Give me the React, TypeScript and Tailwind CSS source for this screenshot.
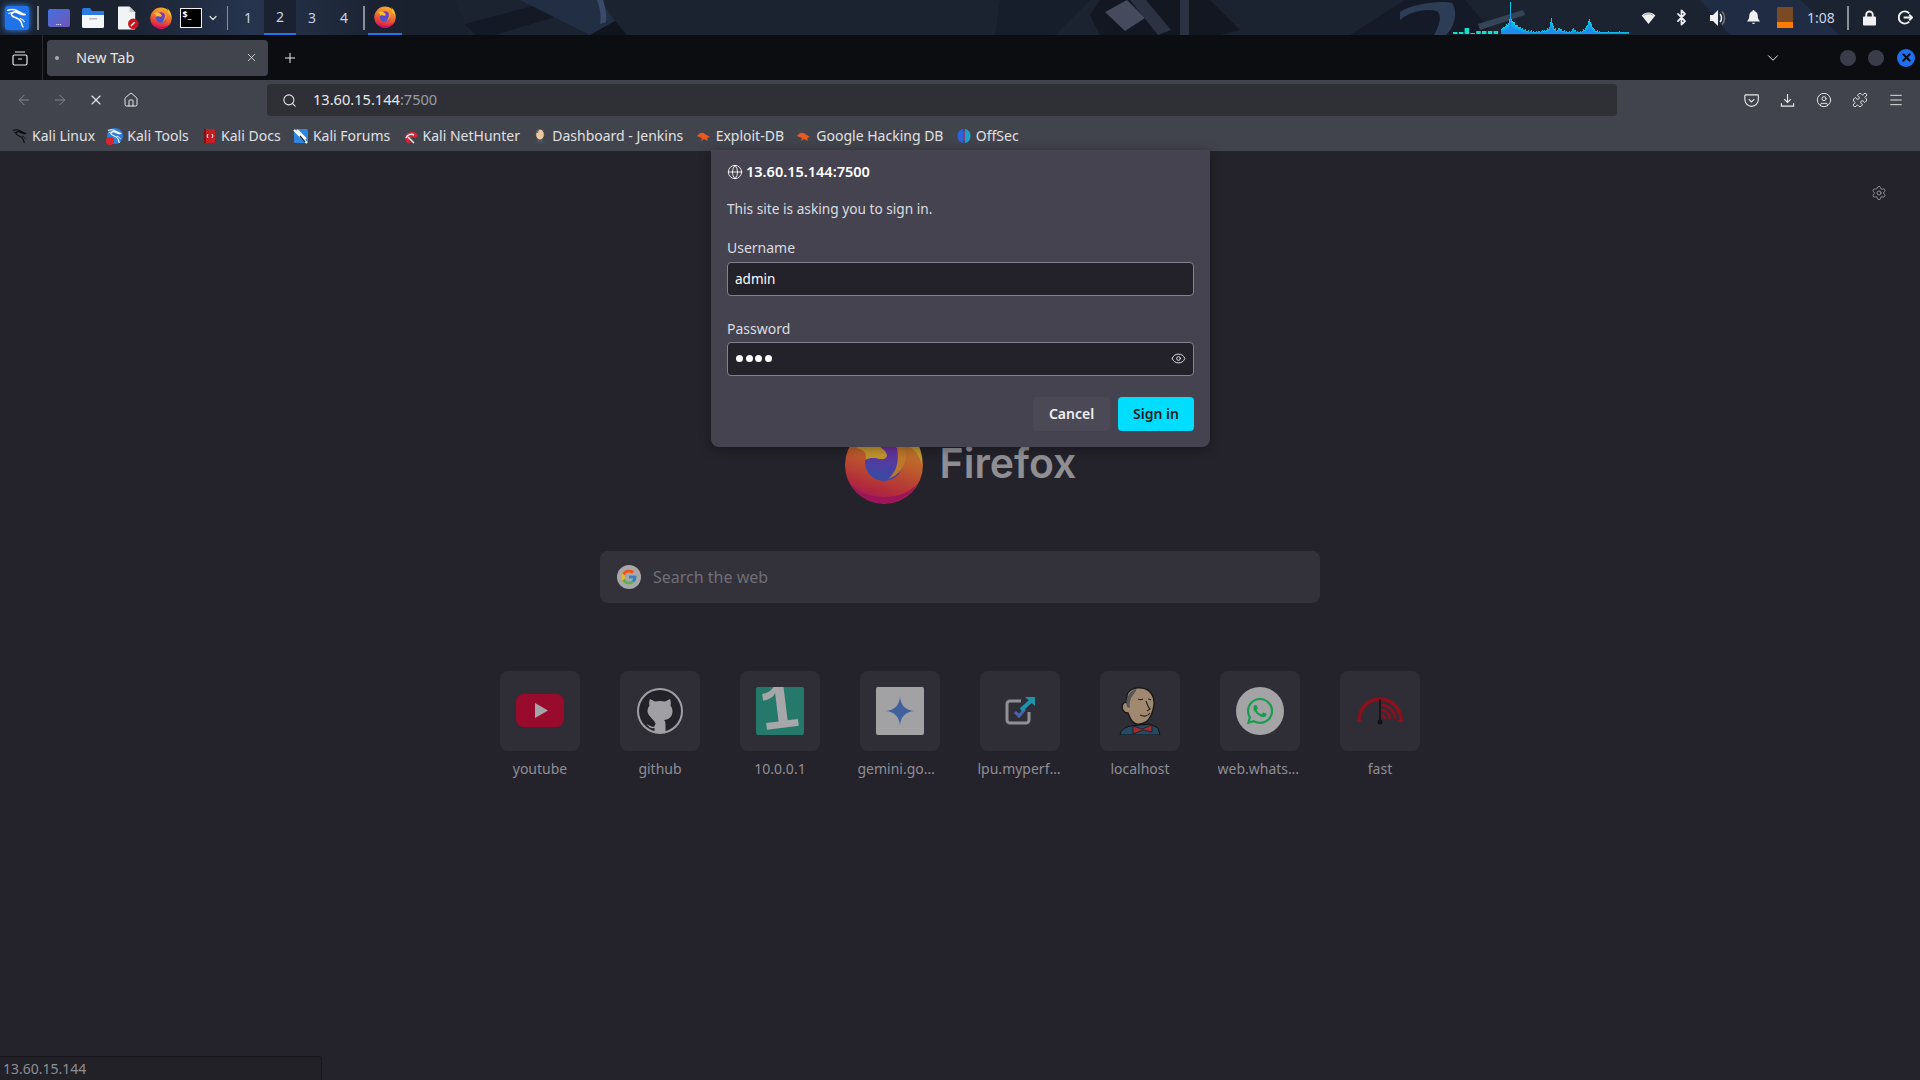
import {
  ArrowLeft,
  ArrowRight,
  Bluetooth,
  ChevronDown,
  CircleUser,
  Eye,
  Globe,
  House,
  Menu,
  Plus,
  Puzzle,
  Search,
  Settings,
  X,
} from "lucide-react";
import { FaWhatsapp } from "react-icons/fa";
import { FcGoogle } from "react-icons/fc";
import { ReactNode } from "react";

const FONT = "font-['Noto_Sans',sans-serif]";

const KaliDragon = ({ color, className }: { color: string; className?: string }) => (
  <svg viewBox="0 0 24 24" className={className} fill="none" stroke={color} strokeLinecap="round" strokeLinejoin="round">
    <path strokeWidth="1.7" d="M2 3.5c3.5-1.2 7-1 10 .5 3.5 1.6 6 3.6 9 4.2-2.6.6-5.2-.2-7.6-1.6-2.6-1.5-5.6-1.4-7 .3-1.2 1.6.2 3.4 3 4.4 3 1.1 6 2.6 7.2 5.4.6 1.4.8 3.300 1.900 5" />
    <path strokeWidth="1.2" d="M3 7c1.500-.8 3-.9 4.500-.4M15.500 12.500c2 .5 3.500 1.700 4.500 3.500" />
  </svg>
);

const FirefoxLogo = ({ className, id }: { className?: string; id: string }) => (
  <svg viewBox="0 0 80 80" className={className}>
    <defs>
      <linearGradient id={`${id}b`} x1="0.7" y1="0" x2="0.4" y2="1">
        <stop offset="0" stopColor="#f5b12e" />
        <stop offset="0.45" stopColor="#f0722c" />
        <stop offset="0.8" stopColor="#e3323f" />
        <stop offset="1" stopColor="#cc1464" />
      </linearGradient>
      <linearGradient id={`${id}p`} x1="0.6" y1="0" x2="0.4" y2="1">
        <stop offset="0" stopColor="#8b2fc0" />
        <stop offset="1" stopColor="#3a5bd0" />
      </linearGradient>
    </defs>
    <circle cx="40" cy="41" r="39" fill={`url(#${id}b)`} />
    <path d="M5 58c8 14 21 21 35 21s27-7 35-21c-8 10-20 15-35 15S13 68 5 58z" fill="#c4106a" />
    <path d="M62 4c10 8 17 22 16 37-2-8-6-14-12-18 1-8 0-13-4-19z" fill="#f8c133" />
    <circle cx="40" cy="38" r="19" fill={`url(#${id}p)`} />
    <path d="M12 24c8-6 20-6 28 2 6 6 2 10-4 9-4-1-10-2-15 1 2-6 1-10-9-12z" fill="#f7bc30" />
    <path d="M50 12c8 3 13 11 12 21-1 10-8 19-18 22 10-8 13-22 6-43z" fill="#f2952c" />
  </svg>
);

const Favicon = ({ kind }: { kind: string }) => {
  if (kind === "kali") return <KaliDragon color="#0c0c0c" className="size-4" />;
  if (kind === "tools")
    return (
      <span className="relative block size-4 rounded-full bg-[#2f7fd8]">
        <KaliDragon color="#ffffff" className="size-4" />
        <span className="absolute -bottom-px -left-px size-2 rounded-full bg-[#d8262c]" />
      </span>
    );
  if (kind === "docs")
    return (
      <svg viewBox="0 0 16 16" className="size-4">
        <rect x="3" y="1" width="11" height="14" rx="1" fill="#c11f24" />
        <rect x="3" y="1" width="2" height="14" fill="#7e1013" />
        <path d="M7 6L6 8l1 2M11 6l1 2-1 2" stroke="#fff" strokeWidth="1" fill="none" />
      </svg>
    );
  if (kind === "forums")
    return (
      <svg viewBox="0 0 16 16" className="size-4">
        <rect x="1" y="1" width="14" height="14" rx="1.500" fill="#2f86e0" />
        <path d="M1 2l13 13M4 2l9 9" stroke="#fff" strokeWidth="2" />
        <path d="M7 8l5 6" stroke="#222" strokeWidth="1.200" />
      </svg>
    );
  if (kind === "hunter")
    return (
      <svg viewBox="0 0 16 16" className="size-4">
        <path d="M2 11a7 7 0 0 1 12-5l1 2-3 2a4 4 0 0 0-6 2l2 3H4z" fill="#d32638" />
        <path d="M3 10a5.500 5.500 0 0 1 8-3" stroke="#eee" strokeWidth="1.500" fill="none" />
        <path d="M5 9l6 6" stroke="#eee" strokeWidth="1.500" />
      </svg>
    );
  if (kind === "jenkins")
    return (
      <svg viewBox="0 0 16 16" className="size-4">
        <path d="M3 16c0-3 2-5 5-5s5 2 5 5z" fill="#335061" />
        <ellipse cx="8" cy="6.500" rx="4.300" ry="5.500" fill="#e8c8a0" stroke="#333" strokeWidth="0.800" />
        <path d="M4 5c0-3 2-4 4-4-1 1-2 2-2 4z" fill="#666" />
        <path d="M6 12l2 1 2-1v2l-2-1-2 1z" fill="#d33833" />
      </svg>
    );
  if (kind === "exploit")
    return (
      <svg viewBox="0 0 16 16" className="size-4">
        <path d="M1 8c3-4 6-4 8-2l5 3-3 1 1 3-4-2-3 2 1-3-5-2z" fill="#ea5a20" />
      </svg>
    );
  return (
    <svg viewBox="0 0 16 16" className="size-4">
      <path d="M7.200 1C3.500 1.500 1.500 4.500 1.500 8s2 6.500 5.700 7z" fill="#2b63d9" />
      <path d="M8.800 1c3.700.5 5.700 3.500 5.700 7s-2 6.500-5.700 7z" fill="#1ea0cf" />
      <path d="M8 3v10" stroke="#c2357c" strokeWidth="1" />
    </svg>
  );
};

const bookmarks = [
  { name: "Kali Linux", kind: "kali" },
  { name: "Kali Tools", kind: "tools" },
  { name: "Kali Docs", kind: "docs" },
  { name: "Kali Forums", kind: "forums" },
  { name: "Kali NetHunter", kind: "hunter" },
  { name: "Dashboard - Jenkins", kind: "jenkins" },
  { name: "Exploit-DB", kind: "exploit" },
  { name: "Google Hacking DB", kind: "exploit" },
  { name: "OffSec", kind: "offsec" },
];

const blueBars = Array.from({ length: 128 }, (_, i) => {
  const peak = (c: number, h: number, w: number) => h * Math.exp(-Math.abs(i - c) / w);
  const noise = ((i * 37) % 11) / 4;
  return Math.round(Math.max(1.5, peak(9, 31, 1.2), peak(10, 14, 9), peak(50, 16, 2), peak(50, 8, 6), peak(88, 15, 3.5), peak(72, 6, 1.5), peak(58, 6, 3)) + noise * (i < 100 ? 0.8 : 0.4));
});
const greenBars = [2, 2, 6, 1, 3, 3, 3, 3];

const Wallpaper = () => (
  <svg className="absolute inset-0 h-[35px] w-[1920px]" viewBox="0 0 1920 35" preserveAspectRatio="none">
    <defs>
      <linearGradient id="wallGlow" x1="0" y1="0" x2="1" y2="0">
        <stop offset="0" stopColor="#1b2331" />
        <stop offset="0.5" stopColor="#26344e" />
        <stop offset="1" stopColor="#1b2331" />
      </linearGradient>
      <linearGradient id="barGrad" x1="0" y1="0" x2="0" y2="1">
        <stop offset="0" stopColor="#06d5e8" />
        <stop offset="0.6" stopColor="#1b8cf0" />
      </linearGradient>
    </defs>
    <rect width="1920" height="35" fill="#1b2331" />
    <rect x="120" width="260" height="35" fill="url(#wallGlow)" />
    <path d="M400 35V0h55l15 35z" fill="#19212f" />
    <path d="M465 24l90-24h40l-10 8-90 27h-20z" fill="#131925" />
    <path d="M520 0h80l25 35H590z" fill="#222e44" />
    <path d="M597 0c4 10 4 18 3 24l6-2c1-8-1-16-3-22z" fill="#3a4a68" />
    <path d="M590 35l25-14 12 14z" fill="#0f141d" />
    <path d="M1000 0h90l-35 35h-60z" fill="#171e2b" />
    <path d="M1100 0h110l30 30-20 5h-120l-10-20z" fill="#121722" />
    <path d="M1105 12l22-12 18 18-20 13z" fill="#454b5c" />
    <path d="M1130 0h16l25 30-13 5zM1180 0h9v35h-9z" fill="#2b3342" />
    <path d="M1350 35l55-35h60l30 35z" fill="#141a27" />
    <path d="M1400 12c12-8 40-12 52-9 6 8 3 24-6 32h-12c6-10 8-20 3-24-12-3-28 1-37 9z" fill="#2e3d56" />
    <path d="M1478 24l45-14 2 5-45 15z" fill="#364457" />
    <path d="M1700 0h100l40 35h-110z" fill="#202c43" />
    {greenBars.map((h, i) => (
      <rect key={i} x={1453 + i * 5.8} y={34 - h} width="4.500" height={h} fill="#0fe0c8" />
    ))}
    {blueBars.map((h, i) => (
      <rect key={i} x={1501 + i} y={34 - h} width="1" height={h} fill="url(#barGrad)" />
    ))}
  </svg>
);

const Sep = ({ ml }: { ml: string }) => <span className={`h-[24px] w-[1.500px] bg-[#8b8f98] ${ml}`} />;

const TaskBar = () => (
  <div className="relative h-[35px] shrink-0 overflow-hidden">
    <Wallpaper />
    <div className="relative flex h-full items-center">
      <span className="ml-[5px] flex size-[24px] items-center justify-center rounded-[3px] bg-[#1f72e8] shadow-[0_0_6px_#2f8cff]">
        <KaliDragon color="#ffffff" className="size-[22px]" />
      </span>
      <Sep ml="ml-[8px]" />
      <span className="ml-[9px] flex h-[18px] w-[22px] items-end justify-center rounded-[2px] bg-gradient-to-br from-[#3f6fe0] to-[#6e56b8] text-[7px] leading-[8px] text-white">...</span>
      <svg viewBox="0 0 22 20" className="ml-[12px] h-[20px] w-[22px]">
        <path d="M0 2a2 2 0 0 1 2-2h6l2 3H0z" fill="#2b7ae0" />
        <rect y="3" width="22" height="17" rx="1.500" fill="#f4f6f8" />
        <rect y="3" width="22" height="4" fill="#2b7ae0" />
        <rect x="7" y="10" width="8" height="1.500" fill="#b8bcc2" />
      </svg>
      <svg viewBox="0 0 22 24" className="ml-[14px] h-[24px] w-[21px]">
        <path d="M0 1a1 1 0 0 1 1-1h11l6 6v17a1 1 0 0 1-1 1H1a1 1 0 0 1-1-1z" fill="#f2f3f5" />
        <path d="M12 0l6 6h-6z" fill="#c8cacd" />
        <circle cx="16" cy="18" r="5.500" fill="#c9141e" />
        <path d="M13.500 20.500l4-4" stroke="#fff" strokeWidth="1.500" />
      </svg>
      <FirefoxLogo id="ffa" className="ml-[11px] size-[22px]" />
      <span className={`ml-[8px] flex h-[20px] w-[22px] border border-[#eee] bg-black pl-[2px] text-[9px] font-bold leading-[12px] text-white ${FONT}`}>$_</span>
      <ChevronDown size={12} strokeWidth={2.5} className="ml-[5px] text-[#ddd]" />
      <Sep ml="ml-[8px]" />
      <div className={`ml-[4px] flex h-full text-[14px] text-[#c8d4e6] ${FONT}`}>
        <span className="flex w-[32px] items-center justify-center pb-[1px]">1</span>
        <span className="flex w-[32px] items-center justify-center border-b-[2px] border-[#2474ea] bg-[#1a2130]">2</span>
        <span className="flex w-[32px] items-center justify-center pb-[1px]">3</span>
        <span className="flex w-[32px] items-center justify-center pb-[1px]">4</span>
      </div>
      <Sep ml="ml-[3px]" />
      <span className="ml-[3px] flex h-full w-[34px] items-center justify-center border-b-[2px] border-[#2474ea] bg-[#1a2130]">
        <FirefoxLogo id="ffb" className="size-[22px]" />
      </span>
      <div className={`ml-auto flex h-full items-center text-[#eee] ${FONT}`}>
        <svg viewBox="0 0 16 14" className="h-[12px] w-[15px]">
          <path d="M0 4c4-4.500 12-4.500 16 0L8 14z" fill="#f0f0f0" />
          <path d="M2.500 4c3-2.500 8-2.500 11 0" stroke="#8b8f98" strokeWidth="1" fill="none" />
        </svg>
        <Bluetooth size={17} strokeWidth={2.5} className="ml-[17px]" />
        <svg viewBox="0 0 18 18" className="ml-[19px] size-[18px]">
          <path d="M1 6h3l5-5v16l-5-5H1z" fill="#f0f0f0" />
          <path d="M11 5c2 2 2 6 0 8" stroke="#f0f0f0" strokeWidth="1.500" fill="none" />
          <path d="M13 2.500c3.500 3.500 3.500 9.500 0 13" stroke="#777" strokeWidth="1.500" fill="none" />
        </svg>
        <svg viewBox="0 0 16 16" className="ml-[19px] size-[15px]">
          <path d="M8 0a1 1 0 0 1 1 1.200c2.500.5 3.500 2.500 3.500 5 0 3 1 4.500 2.500 6H1c1.500-1.500 2.500-3 2.500-6 0-2.500 1-4.500 3.500-5A1 1 0 0 1 8 0zM6.500 13.500h3a1.500 1.500 0 0 1-3 0z" fill="#f0f0f0" />
        </svg>
        <span className="ml-[16.500px] flex h-[21px] w-[16px] flex-col justify-end rounded-[1px] bg-[#7a4a24]">
          <span className="h-[6px] bg-[#ff7a00]" />
        </span>
        <span className="ml-[14px] w-[28px] text-[14px] text-[#c8d4e6]">1:08</span>
        <Sep ml="ml-[12px]" />
        <svg viewBox="0 0 14 16" className="ml-[14px] h-[16px] w-[13px]">
          <path d="M3.500 7V4.500a3.500 3.500 0 0 1 7 0V7" stroke="#f0f0f0" strokeWidth="2" fill="none" />
          <rect y="6.500" width="14" height="9.500" rx="1" fill="#f0f0f0" />
        </svg>
        <svg viewBox="0 0 16 16" className="ml-[22.500px] mr-[7px] size-[15px]">
          <path d="M12 3.500A6.500 6.500 0 1 0 12 12.500" stroke="#f0f0f0" strokeWidth="2" fill="none" />
          <path d="M6 8h9M12 5l3 3-3 3" stroke="#f0f0f0" strokeWidth="2" fill="none" />
        </svg>
      </div>
    </div>
  </div>
);

const TabBar = () => (
  <div className={`flex h-[45px] shrink-0 items-center bg-[#0c0d11] ${FONT}`}>
    <svg viewBox="0 0 16 16" className="ml-[12px] size-[16px] text-[#e8e8e8]" fill="none" stroke="currentColor" strokeWidth="1.200">
      <rect x="1" y="5" width="14" height="10" rx="1.500" />
      <path d="M3 2h10M6 9h4" />
    </svg>
    <span className="ml-[14px] h-[45px] w-px bg-[#2a2b30]" />
    <div className="ml-[4px] flex h-[36px] w-[221px] items-center rounded-[4px] bg-[#42444d] text-[14.600px] text-[#e4e4e6]">
      <span className="ml-[8px] size-[4px] rounded-full bg-[#a8a8ae]" />
      <span className="ml-[17px]">New Tab</span>
      <X size={13} strokeWidth={1.5} className="ml-auto mr-[10px]" />
    </div>
    <Plus size={16} strokeWidth={1.5} className="ml-[14px] text-[#eee]" />
    <ChevronDown size={18} strokeWidth={1.3} className="ml-auto text-[#eee]" />
    <span className="ml-[58px] size-[16px] rounded-full bg-[#3a3d49]" />
    <span className="ml-[12px] size-[16px] rounded-full bg-[#3a3d49]" />
    <span className="ml-[13px] mr-[5px] flex size-[18px] items-center justify-center rounded-full bg-[#1f6ff0]">
      <X size={13} strokeWidth={3.5} className="text-[#0c0d11]" />
    </span>
  </div>
);

const ToolBar = () => (
  <div className={`flex h-[37px] shrink-0 items-center bg-[#42444d] pt-[3px] text-[#e8e8ea] ${FONT}`}>
    <ArrowLeft size={16} strokeWidth={1.5} className="ml-[16px] text-[#85868c]" />
    <ArrowRight size={16} strokeWidth={1.5} className="ml-[20px] text-[#85868c]" />
    <X size={16} strokeWidth={1.7} className="ml-[20px]" />
    <House size={16} strokeWidth={1.5} className="ml-[19px]" />
    <div className="ml-[128px] flex h-[32px] w-[1350px] items-center rounded-[4px] bg-[#2e3036]">
      <Search size={15} strokeWidth={1.7} className="ml-[15px]" />
      <span className="ml-[16px] text-[14.600px]">
        13.60.15.144<span className="text-[#9b9ca2]">:7500</span>
      </span>
    </div>
    <svg viewBox="0 0 16 16" className="ml-[127px] size-[15px]" fill="none" stroke="currentColor" strokeWidth="1.200">
      <path d="M1.500 2h13a.8.8 0 0 1 .8.8V7a7.200 7.200 0 0 1-14.400 0V2.800a.8.8 0 0 1 .6-.8z" />
      <path d="M5 6.500l3 3 3-3" />
    </svg>
    <svg viewBox="0 0 16 16" className="ml-[21px] size-[15px]" fill="none" stroke="currentColor" strokeWidth="1.200">
      <path d="M8 1v9M4.500 6.500L8 10l3.500-3.500M1.500 11v3h13v-3" />
    </svg>
    <CircleUser size={16} strokeWidth={1.4} className="ml-[21px]" />
    <Puzzle size={16} strokeWidth={1.4} className="ml-[20px]" />
    <Menu size={16} strokeWidth={1.4} className="ml-[20px]" />
  </div>
);

const BookmarksBar = () => (
  <div className={`flex h-[34px] shrink-0 items-center gap-[12.300px] bg-[#42444d] pl-[12px] pt-[3px] text-[14px] text-[#e0e0e2] ${FONT}`}>
    {bookmarks.map((b) => (
      <span key={b.name} className="flex items-center gap-[4px]">
        <Favicon kind={b.kind} />
        <span>{b.name}</span>
      </span>
    ))}
  </div>
);

const SignInDialog = () => (
  <div className={`absolute left-[711px] top-[150px] flex h-[297px] w-[499px] flex-col rounded-b-[8px] bg-[#44434f] px-[16px] text-[#e8e8ea] shadow-[0_2px_12px_rgba(0,0,0,0.35)] ${FONT}`}>
    <div className="mt-[11px] flex items-center gap-[3px] text-[14.500px] font-semibold text-white">
      <Globe size={16} strokeWidth={1.3} />
      <span>13.60.15.144:7500</span>
    </div>
    <p className="mt-[16px] text-[13.700px] leading-[20px] text-[#dcdce0]">This site is asking you to sign in.</p>
    <label className="mt-[19px] text-[14px] leading-[20px] text-[#dcdce0]">Username</label>
    <div className="mt-[4px] flex h-[34px] items-center rounded-[4px] border border-[#84838c] bg-[#23222b] pl-[7px] text-[13.500px] text-white">admin</div>
    <label className="mt-[23px] text-[14px] leading-[20px] text-[#dcdce0]">Password</label>
    <div className="mt-[3px] flex h-[34px] items-center gap-[2.500px] rounded-[4px] border border-[#84838c] bg-[#23222b] pl-[8px] pr-[7px]">
      <span className="size-[7px] rounded-full bg-white" />
      <span className="size-[7px] rounded-full bg-white" />
      <span className="size-[7px] rounded-full bg-white" />
      <span className="size-[7px] rounded-full bg-white" />
      <Eye size={15} strokeWidth={1.5} className="ml-auto" />
    </div>
    <div className="mt-[21px] flex justify-end gap-[8px] text-[14px] font-semibold">
      <button className="h-[34px] w-[77px] rounded-[4px] bg-[#4a4955] text-[#f0f0f2]">Cancel</button>
      <button className="h-[34px] w-[76px] rounded-[4px] bg-[#00ddff] text-[#1c1b22]">Sign in</button>
    </div>
  </div>
);

const Tile = ({ label, children }: { label: string; children: ReactNode }) => (
  <div className="flex w-[120px] flex-col items-center">
    <div className="flex size-[80px] items-center justify-center rounded-[8px] bg-[#2f2e37]">
      <div className="flex size-[48px] items-center justify-center overflow-hidden">{children}</div>
    </div>
    <span className="mt-[7px] w-[85px] truncate text-center text-[14px] leading-[22px] text-[#8f8e95]">{label}</span>
  </div>
);

const TopSites = () => (
  <div className={`mt-[68px] flex ${FONT}`}>
    <Tile label="youtube">
      <svg viewBox="0 0 48 34" className="w-[48px]">
        <rect width="48" height="33" rx="8" fill="#990b2c" />
        <path d="M19 9l13 7.500L19 24z" fill="#a5a5a9" />
      </svg>
    </Tile>
    <Tile label="github">
      <svg viewBox="0 0 46 46" className="size-[46px]">
        <circle cx="23" cy="23" r="22" fill="#232229" stroke="#a0a0a4" strokeWidth="2" />
        <path d="M13 11l5 2.500c3-.8 7-.8 10 0l5-2.500c1 2.500 1 5 .5 6.500 1.500 2 2 4 2 6 0 5-3.500 8-8.500 8.500 1 1 1.500 2.500 1.500 4V44h-11v-4c-3 .6-6-.6-8-4 2 1 3.500 2 5 2.500 1 .3 2 .3 3 0 0-1 .5-2 1.200-3C16.500 31 11 28 10.500 23.500c0-2 .5-4 2-6-.5-1.500-.5-4 .5-6.500z" fill="#a0a0a4" />
      </svg>
    </Tile>
    <Tile label="10.0.0.1">
      <span className="relative block size-[48px] overflow-hidden rounded-[2px] bg-[#25796a]">
        <span className="absolute left-[4px] top-[-12px] rotate-[-7deg] font-['Liberation_Mono',monospace] text-[66px] font-bold leading-[72px] text-[#a7a7a9]">1</span>
      </span>
    </Tile>
    <Tile label="gemini.google.com">
      <span className="flex size-[48px] items-center justify-center rounded-[2px] bg-[#a2a2a5]">
        <svg viewBox="0 0 28 28" className="size-[28px]">
          <path d="M14 0c1 8 5 13 14 14-9 1-13 6-14 14-1-8-5-13-14-14 9-1 13-6 14-14z" fill="#41619e" />
        </svg>
      </span>
    </Tile>
    <Tile label="lpu.myperfectice.com">
      <svg viewBox="0 0 32 32" className="size-[32px]">
        <path d="M17 6H6a3 3 0 0 0-3 3v16a3 3 0 0 0 3 3h16a3 3 0 0 0 3-3V17" stroke="#8f8f95" strokeWidth="3" fill="none" />
        <path d="M11 17l4 4 6-7" stroke="#4763b0" strokeWidth="3" fill="none" />
        <path d="M17 15L28 5" stroke="#1e93ad" strokeWidth="4" />
        <path d="M21 2h10v9z" fill="#1e93ad" />
      </svg>
    </Tile>
    <Tile label="localhost">
      <svg viewBox="0 0 48 48" className="size-[48px]">
        <path d="M4 48c1-5 4-7 10-9l20-2 8 4 2 7z" fill="#264a63" stroke="#111" strokeWidth="1" />
        <path d="M11 8c2-6 9-8 15-7 8 1 13 8 12 17-1 7-3 13-8 17-5 3-11 3-14-1-2-2-3-6-4-8-5 0-7-5-5-9 1-2 3-2 4-1z" fill="#a08970" stroke="#1a1a1a" strokeWidth="1.500" />
        <path d="M12 9c-2 4-2 7-1 11l3 1c-1-5 0-9 3-13 2-3 4-5 3-6-3 1-6 3-8 7z" fill="#55565a" />
        <path d="M22 12c2 1 3 1 5 0M32 12c1 0 2 0 3 1M24 28c4 2 8 1 10-2M30 14c1 3 2 6 4 8l-3 2" stroke="#2a2420" strokeWidth="1.200" fill="none" />
        <path d="M17 39l9 3 10-4v7l-9-2-10 4z" fill="#a32a30" stroke="#1a1a1a" strokeWidth="0.800" />
      </svg>
    </Tile>
    <Tile label="web.whatsapp.com">
      <span className="flex size-[48px] items-center justify-center rounded-full bg-[#a4a4a7]">
        <FaWhatsapp size={30} className="text-[#179c4c]" />
      </span>
    </Tile>
    <Tile label="fast">
      <svg viewBox="0 0 48 48" className="size-[48px]">
        <path d="M3 33a21 21 0 0 1 42 0" stroke="#8e0e1c" strokeWidth="3.500" fill="none" />
        <path d="M24 12v22" stroke="#111" strokeWidth="1.500" />
        <path d="M25 18a14 14 0 0 1 14 14M25 23a9 9 0 0 1 9 9M25 28a4 4 0 0 1 4 4" stroke="#8e0e1c" strokeWidth="2.500" fill="none" />
        <circle cx="24" cy="35" r="2.500" fill="#111" />
        <path d="M1 33h5v2H1zM42 33h5v2h-5z" fill="#8e0e1c" />
      </svg>
    </Tile>
  </div>
);

const NewTabPage = () => (
  <main className={`relative flex flex-1 flex-col items-center bg-[#24232b] ${FONT}`}>
    <Settings size={16} strokeWidth={1.5} className="absolute left-[1871px] top-[34px] text-[#8f8e95]" />
    <div className="mt-[274px] flex h-[78px] items-center gap-[16px]">
      <FirefoxLogo id="ffc" className="size-[80px] opacity-75" />
      <span className="font-['Inter',sans-serif] text-[41px] font-semibold text-[#8e8e93]">Firefox</span>
    </div>
    <div className="mt-[48px] flex h-[52px] w-[720px] items-center rounded-[8px] bg-[#33323b]">
      <span className="ml-[17px] flex size-[24px] items-center justify-center rounded-full bg-[#a8a8aa]">
        <FcGoogle size={18} className="opacity-80" />
      </span>
      <span className="ml-[12px] text-[16px] text-[#6f6e76]">Search the web</span>
    </div>
    <TopSites />
    <div className="absolute bottom-0 left-0 flex h-[24px] w-[322px] items-center rounded-tr-[4px] border-r border-t border-[#17161c] bg-[#212127] pl-[3px] text-[14px] text-[#8f8e95]">13.60.15.144</div>
  </main>
);

const App = () => {
  return (
    <div className="relative flex h-[1080px] w-[1920px] flex-col overflow-hidden">
      <TaskBar />
      <TabBar />
      <ToolBar />
      <BookmarksBar />
      <NewTabPage />
      <SignInDialog />
    </div>
  );
};

export default App;
